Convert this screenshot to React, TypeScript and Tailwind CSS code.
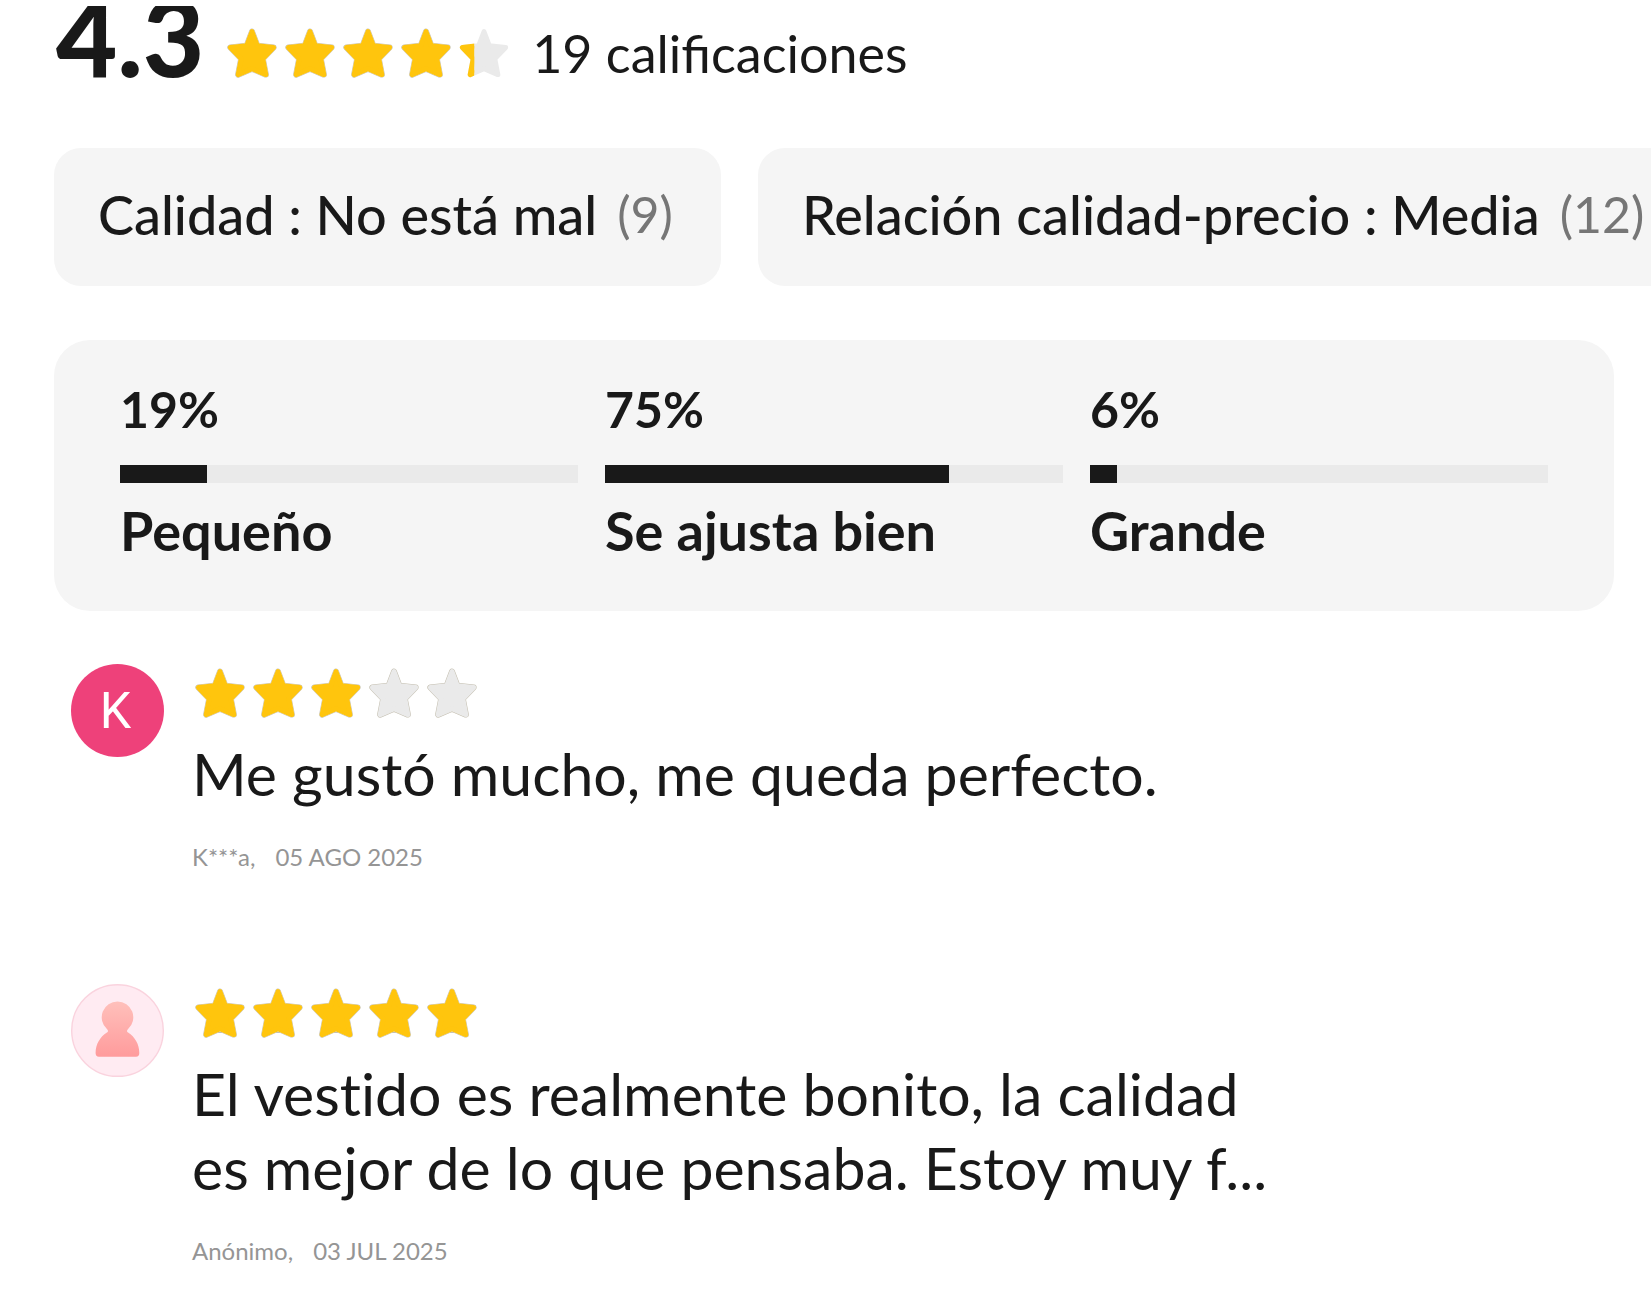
import { useId } from "react";

const TAGS = [
  { label: "Calidad : No está mal", count: 9 },
  { label: "Relación calidad-precio : Media", count: 12 },
];

const FIT = [
  { label: "Pequeño", percent: 19 },
  { label: "Se ajusta bien", percent: 75 },
  { label: "Grande", percent: 6 },
];

type Review = {
  user: string;
  date: string;
  rating: number;
  lines: string[];
  initial?: string;
};

const REVIEWS: Review[] = [
  {
    user: "K***a",
    date: "05 AGO 2025",
    rating: 3,
    lines: ["Me gustó mucho, me queda perfecto."],
    initial: "K",
  },
  {
    user: "Anónimo",
    date: "03 JUL 2025",
    rating: 5,
    lines: ["El vestido es realmente bonito, la calidad", "es mejor de lo que pensaba. Estoy muy f..."],
  },
];

const STAR_PATH =
  "M24 3L29.2 16.8L45.2 18.6L34.6 29.6L37.6 45.2L24 39.4L10.4 45.2L13.4 29.6L2.8 18.6L18.8 16.8Z";

function Star({ fill }: { fill: number }) {
  const id = useId();
  const partial = fill > 0 && fill < 1;

  return (
    <svg
      viewBox="0.5 0.5 47 47"
      className="size-12 shrink-0 overflow-visible"
      strokeLinejoin="round"
      aria-hidden="true"
    >
      {!partial && <path d={STAR_PATH} fill="#c4bfb0" stroke="#c4bfb0" strokeWidth={5.8} />}
      <path d={STAR_PATH} fill="#eaeaea" stroke="#eaeaea" strokeWidth={4.8} />
      <clipPath id={id}>
        <rect x="-1" y="-1" width={fill === 1 ? 50 : 48 * fill + 1} height="50" />
      </clipPath>
      {fill > 0 && (
        <path d={STAR_PATH} fill="#ffc50d" stroke="#ffc50d" strokeWidth={4.8} clipPath={`url(#${id})`} />
      )}
    </svg>
  );
}

function Stars({ rating }: { rating: number }) {
  return (
    <div className="flex gap-2.5" role="img" aria-label={`${rating} de 5 estrellas`}>
      {[0, 1, 2, 3, 4].map((i) => (
        <Star key={i} fill={Math.max(0, Math.min(1, rating - i))} />
      ))}
    </div>
  );
}

function Avatar({ initial }: { initial?: string }) {
  if (initial) {
    return (
      <div className="flex size-[93px] shrink-0 items-center justify-center rounded-full bg-[#ee417a] pr-1 font-[Roboto] text-[50px] leading-none text-white">
        {initial}
      </div>
    );
  }

  return (
    <svg viewBox="0 0 93 93" className="size-[93px] shrink-0" aria-hidden="true">
      <defs>
        <linearGradient id="person" x1="0" y1="0" x2="0" y2="1">
          <stop offset="0" stopColor="#ffc0bb" />
          <stop offset="1" stopColor="#ff9b9c" />
        </linearGradient>
      </defs>
      <circle cx="46.5" cy="46.5" r="45.8" fill="#ffebf2" stroke="#fad3de" strokeWidth="1.4" />
      <path
        d="M46.5 17.5a15.8 15.8 0 0 1 10.6 27.5c-1.4 1.2-1.5 2.6 0 3.6C64 53 68.3 60.5 68.3 69c0 2.4-1 3.7-3.4 3.7H28c-2.4 0-3.4-1.3-3.4-3.7 0-8.500 4.300-16 11.300-20.400 1.500-1 1.400-2.400 0-3.600A15.800 15.800 0 0 1 46.500 17.500Z"
        fill="url(#person)"
      />
    </svg>
  );
}

function ReviewItem({ review }: { review: Review }) {
  return (
    <article className="flex gap-7">
      <Avatar initial={review.initial} />
      <div className="flex min-w-0 flex-col pt-[5px]">
        <div className="pl-1">
          <Stars rating={review.rating} />
        </div>
        <p className="mt-5 text-[59px] leading-[74px] [font-variant-ligatures:none]">
          {review.lines.map((line) => (
            <span key={line} className="block whitespace-nowrap">
              {line}
            </span>
          ))}
        </p>
        <p className="mt-[30px] flex gap-5 text-2xl leading-8 text-[#959595]">
          <span>{review.user},</span>
          <time>{review.date}</time>
        </p>
      </div>
    </article>
  );
}

export default function App() {
  return (
    <main className="min-h-screen overflow-hidden bg-white pt-1.5 font-[Lato,sans-serif] text-[#191919]">
      {/* Average score, the top of the digits is scrolled under the edge */}
      <header className="flex h-[92px] items-start overflow-hidden pl-14">
        <strong className="-mt-[22px] text-[106px] leading-[104px] font-black">4.3</strong>
        <div className="ml-6 flex items-center gap-6 pt-5">
          <Stars rating={4.3} />
          <span className="text-[52px] leading-[54px]">19 calificaciones</span>
        </div>
      </header>

      <div className="mt-[50px] flex gap-[37px] overflow-hidden pl-[54px]">
        {TAGS.map((tag) => (
          <button
            key={tag.label}
            type="button"
            className="flex h-[138px] shrink-0 items-center gap-5 rounded-[27px] bg-[#f5f5f5] pr-12 pb-1.5 pl-11 text-[54px] font-medium whitespace-nowrap"
          >
            {tag.label}
            <span className="text-[50px] font-normal text-[#767676]">({tag.count})</span>
          </button>
        ))}
      </div>

      <section className="mt-[54px] mr-[37px] ml-[54px] grid grid-cols-3 gap-[27px] rounded-[36px] bg-[#f5f5f5] px-[66px] pt-[37px] pb-12 leading-[64px] font-bold">
        {FIT.map((fit) => (
          <div key={fit.label}>
            <div className="text-[50px]">{fit.percent}%</div>
            <div className="mt-6 mb-4 h-[18px] bg-[#eaeaea]">
              <div className="h-full bg-[#191919]" style={{ width: `${fit.percent}%` }} />
            </div>
            <div className="text-[54px]">{fit.label}</div>
          </div>
        ))}
      </section>

      <section className="mt-[53px] flex flex-col gap-[111px] px-[71px]">
        {REVIEWS.map((review) => (
          <ReviewItem key={review.user} review={review} />
        ))}
      </section>
    </main>
  );
}
